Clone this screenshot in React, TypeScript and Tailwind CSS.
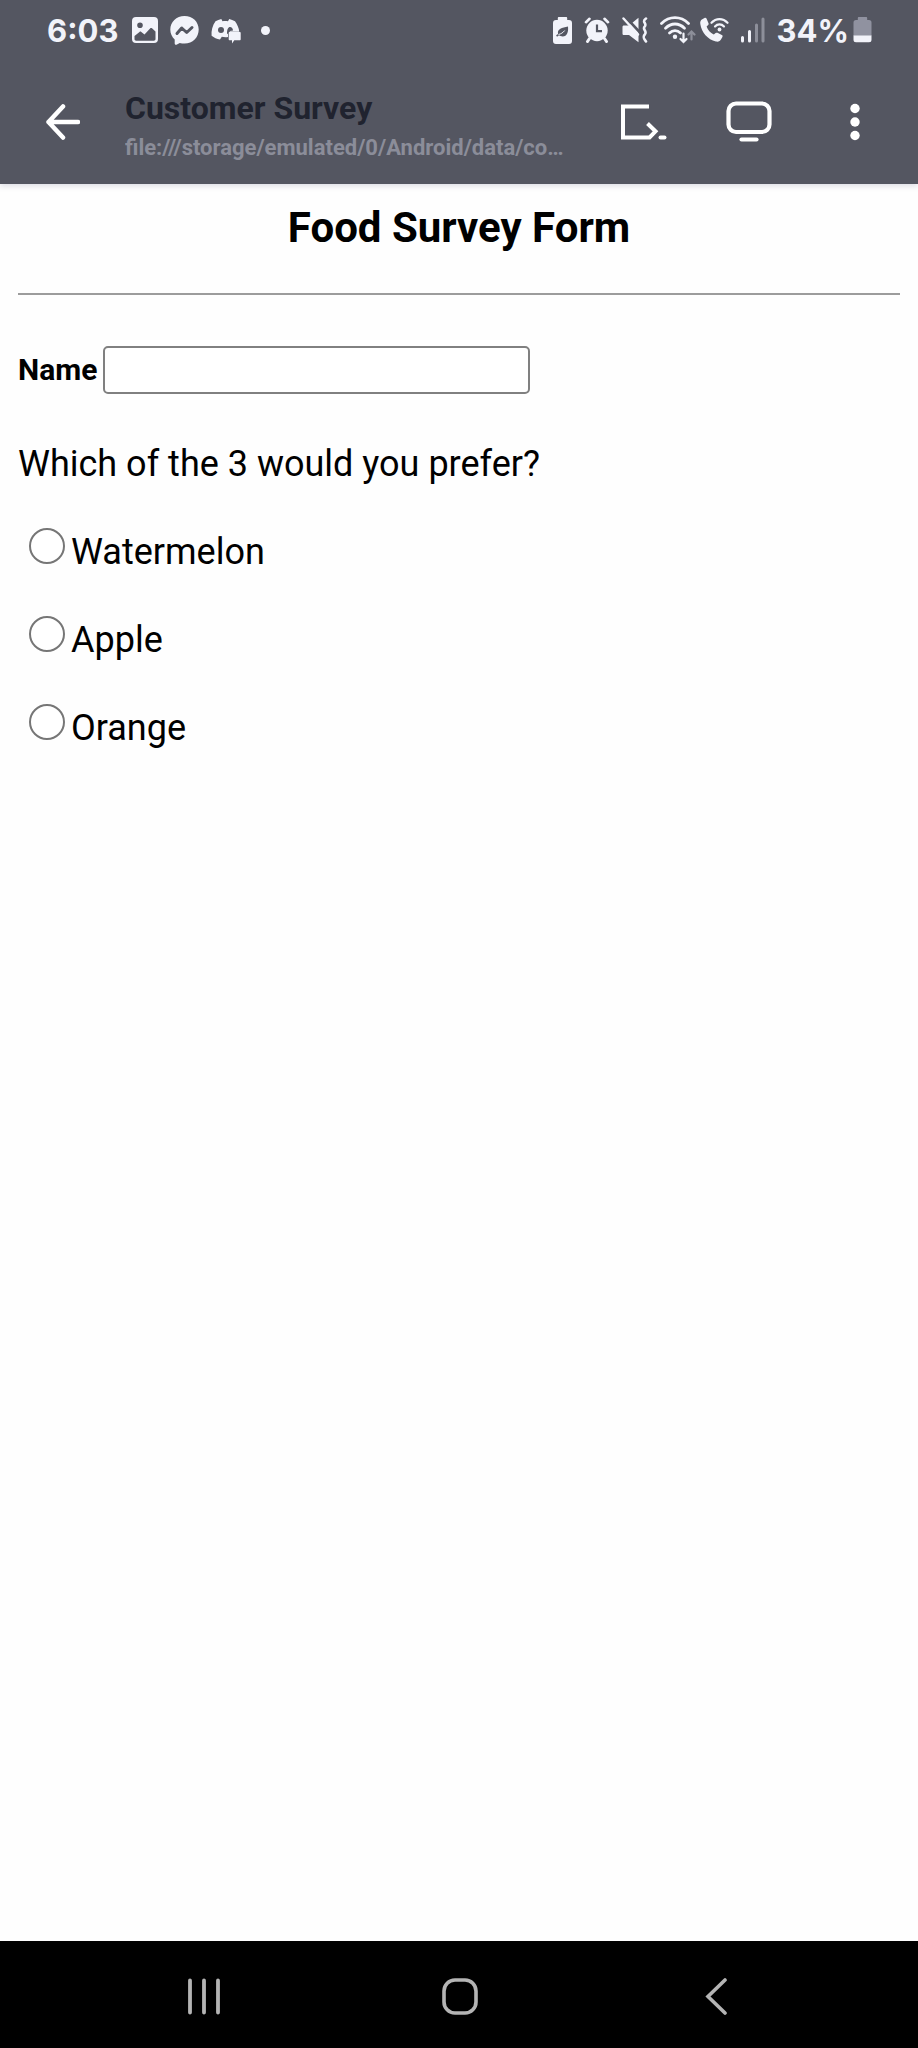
import React, { useState } from "react";

const FRUITS = ["Watermelon", "Apple", "Orange"];

function ImageIcon() {
  return (
    <svg width="26" height="26" viewBox="0 0 26 26" aria-hidden="true">
      <path
        fill="currentColor"
        fillRule="evenodd"
        d="M4 0h18a4 4 0 0 1 4 4v18a4 4 0 0 1-4 4H4a4 4 0 0 1-4-4V4a4 4 0 0 1 4-4ZM8 5.500a2.800 2.800 0 1 0 0 5.600a2.800 2.800 0 0 0 0-5.600ZM2.500 19v3c0 1 .7 1.700 1.700 1.700h17.600c1 0 1.700-.7 1.700-1.700v-7.500l-3.500-3.200c-.6-.5-1.200-.5-1.700 0l-5.800 6.200-3.200-2.600c-.6-.5-1.200-.5-1.800 0L2.500 19Z"
      />
    </svg>
  );
}

function MessengerIcon() {
  return (
    <svg width="29" height="29" viewBox="0 0 29 29" aria-hidden="true">
      <path
        fill="currentColor"
        d="M14.500 0C6.300 0 .3 5.900.3 13.600c0 4 1.700 7.500 4.400 9.900v4c0 1 1 1.600 1.800 1.200l3.300-1.700c1.500.4 3.100.6 4.700.6 8.200 0 14.200-6.100 14.200-14S22.700 0 14.500 0Z"
      />
      <path d="m7 17.500 4.700-5.500 5 4.500 5.300-5" fill="none" stroke="#545661" strokeWidth="3" strokeLinejoin="round" strokeLinecap="round" />
    </svg>
  );
}

function DiscordIcon() {
  return (
    <svg width="30" height="28" viewBox="0 0 30 28" aria-hidden="true">
      <path
        fill="currentColor"
        d="M4.500 5.200C6.300 4.200 8.300 3.500 10.300 3l1.200 2.200c1.800-.3 3.700-.3 5.500 0L18.200 3c2 .5 4 1.200 5.800 2.200 2.400 3.400 3.900 6.800 4.300 10.600H17v5.300c-2.300.3-4 .2-6.200-.3L9 23.600C5.800 23 3 21.700.6 19.800.1 14.500 1.500 9.500 4.500 5.200Z"
      />
      <circle cx="10" cy="14" r="3" fill="#545661" />
      <path d="M16 17.500c0-4.200 1.200-6.500 3-6.500 1.700 0 2.900 1.200 3 3.500l-3 .5-1.500 3.500Z" fill="#545661" />
      <path fill="currentColor" d="M18.700 16h10c.6 0 1 .4 1 1v6.200c0 .6-.4 1-1 1h-5.400L21 27.500v-3.300h-2.300c-.6 0-1-.4-1-1V17c0-.6.4-1 1-1Z" />
    </svg>
  );
}

function PowerSavingIcon() {
  return (
    <svg width="19" height="27" viewBox="0 0 19 27" aria-hidden="true">
      <path fill="currentColor" d="M6 0h7c.8 0 1.200.5 1.200 1.200V3H16a3 3 0 0 1 3 3v18a3 3 0 0 1-3 3H3a3 3 0 0 1-3-3V6a3 3 0 0 1 3-3h1.800V1.200C4.800.5 5.200 0 6 0Z" />
      <path fill="#545661" d="M15 9.500c.6 5.500-.9 10-5.300 10-1.600 0-2.900-.5-3.700-1.200L4 19.700l-.9-1.500 2-1.200C4 12 9 10.500 15 9.500Z" />
      <path d="M5.500 17.500c2.500-.6 4.500-1.800 6.200-4" fill="none" stroke="currentColor" strokeWidth="1" />
    </svg>
  );
}

function AlarmIcon() {
  return (
    <svg width="26" height="26" viewBox="0 0 26 26" aria-hidden="true">
      <g fill="none" stroke="currentColor" strokeLinecap="round">
        <path d="M2 5.200 5.500 1.800M24 5.200 20.500 1.800" strokeWidth="2.600" />
        <path d="m5.500 21.500-2 3M20.500 21.500l2 3" strokeWidth="3" />
      </g>
      <circle cx="13" cy="13.500" r="10.700" fill="currentColor" />
      <path d="M13 7.500v6.700h5" fill="none" stroke="#545661" strokeWidth="2.200" />
    </svg>
  );
}

function MuteVibrateIcon() {
  return (
    <svg width="26" height="26" viewBox="0 0 26 26" aria-hidden="true">
      <path fill="currentColor" d="M2 8.500h5L16.500.8v24.400L7 18H2c-1 0-1.500-.5-1.500-1.500V10c0-1 .5-1.500 1.500-1.500Z" />
      <path d="M3.500 0 18 15.500" stroke="#545661" strokeWidth="2.600" />
      <path d="M1.500 1.500 16 17.500" stroke="currentColor" strokeWidth="2.400" strokeLinecap="round" />
      <path d="M24 1.500c-5 3.600 1 4.200-1 7.600-3.500 3.600 2.500 4.400 0 8-3 3.600-.5 5.200 1 7.400" fill="none" stroke="currentColor" strokeWidth="2.600" strokeLinecap="round" />
    </svg>
  );
}

function WifiIcon() {
  return (
    <svg width="36" height="28" viewBox="0 0 36 28" aria-hidden="true">
      <g fill="none" stroke="currentColor" strokeLinecap="round" strokeWidth="2.800">
        <path d="M1.500 7.500c7.800-7.800 19.200-7.800 27 0" />
        <path d="M5.500 12.200c5.600-5.600 13.400-5.600 19 0" />
        <path d="M9.500 17c3.200-3.200 7.800-3.200 11 0" />
      </g>
      <circle cx="15" cy="20.800" r="2.200" fill="currentColor" />
      <path d="M23.500 17.500V26m-3-3 3 3 3-3" fill="none" stroke="currentColor" strokeWidth="2.200" strokeLinecap="round" />
      <path d="M31.500 23.500V15.500m-3 3 3-3 3 3" fill="none" stroke="#8d8f9a" strokeWidth="2.200" strokeLinecap="round" />
    </svg>
  );
}

function WifiCallIcon() {
  return (
    <svg width="29" height="26" viewBox="0 0 29 26" aria-hidden="true">
      <path
        fill="currentColor"
        d="M2.300 2.300 4.500 1c.8-.5 1.600-.2 2 .6l2 4.600c.3.700.1 1.400-.4 1.900L6.600 9.600c1.200 3.600 3.700 6.300 7.200 8l1.800-1.500c.6-.5 1.200-.6 1.900-.3l4.300 2.200c.8.4 1 1.200.6 2l-1.300 2.300c-1 2-2.800 2.800-5.200 2.300C7.800 22.500 1.500 15.500.3 7 0 4.800.5 3.300 2.300 2.300Z"
      />
      <g fill="none" stroke="currentColor" strokeWidth="2.200" strokeLinecap="round">
        <path d="M11.500 5.800c4.500-5 11.500-5 16 0" />
        <path d="M15 9.500c2.500-2.800 6.500-2.800 9 0" />
      </g>
      <circle cx="19.500" cy="12.500" r="1.900" fill="currentColor" />
    </svg>
  );
}

function SignalIcon() {
  return (
    <svg width="24" height="26" viewBox="0 0 24 26" aria-hidden="true">
      <g strokeWidth="3" strokeLinecap="round">
        <path d="M1.500 20.500V24M8.500 14.500V24" stroke="currentColor" />
        <path d="M15.500 8v16M22 2v22" stroke="#8d8f9a" />
      </g>
    </svg>
  );
}

function BatteryIcon() {
  return (
    <svg width="19" height="26" viewBox="0 0 19 26" aria-hidden="true">
      <path fill="#9092a0" d="M6 0h7c.8 0 1.200.5 1.200 1.200V3H16a2.500 2.500 0 0 1 2.500 2.500V19H.5V5.500A2.500 2.500 0 0 1 3 3h1.800V1.200C4.800.5 5.200 0 6 0Z" />
      <path fill="currentColor" d="M.5 18.500h18v4.200A2.500 2.500 0 0 1 16 25.200H3a2.500 2.500 0 0 1-2.500-2.500Z" />
    </svg>
  );
}

function StatusBar() {
  return (
    <div className="flex h-[60px] items-center justify-between pr-[46px] pl-[47px] font-['Inter',sans-serif] text-[31px] leading-none font-bold text-[#f2f3fa]">
      <div className="flex items-center gap-3">
        <span className="mr-[2px]">6:03</span>
        <ImageIcon />
        <MessengerIcon />
        <DiscordIcon />
        <span className="ml-2 size-[9px] rounded-full bg-[#f2f3fa]" />
      </div>
      <div className="flex items-center gap-3">
        <PowerSavingIcon />
        <AlarmIcon />
        <MuteVibrateIcon />
        <div className="flex items-center gap-1">
          <WifiIcon />
          <WifiCallIcon />
        </div>
        <SignalIcon />
        <div className="flex items-center gap-1">
          <span>34%</span>
          <BatteryIcon />
        </div>
      </div>
    </div>
  );
}

function AppBar() {
  return (
    <div className="flex h-[124px] items-center pr-9 pl-[38px] text-white">
      <button type="button" aria-label="Back" className="shrink-0 p-2">
        <svg width="34" height="36" viewBox="0 0 34 36" fill="none" stroke="currentColor" strokeWidth="4.500" strokeLinecap="round" strokeLinejoin="round" aria-hidden="true">
          <path d="M32 18H2.500M17 2.500 2.500 18 17 33.500" />
        </svg>
      </button>
      <div className="ml-[37px] min-w-0 flex-1 pt-3 font-bold">
        <h1 className="truncate text-[32px] leading-10 text-[#20232f]">Customer Survey</h1>
        <p className="truncate text-[22px] leading-10 text-[#8b8d99]">file:///storage/emulated/0/Android/data/co…</p>
      </div>
      <div className="ml-8 flex shrink-0 items-center">
        <button type="button" aria-label="Console" className="p-2">
          <svg width="48" height="40" viewBox="0 0 48 40" fill="none" stroke="currentColor" strokeWidth="4" aria-hidden="true">
            <path d="M29 4.500H3V35.500h26.500l6-6.200L27.500 21.500" strokeLinejoin="miter" />
            <path d="M40.500 35.500h4" strokeLinecap="round" />
          </svg>
        </button>
        <button type="button" aria-label="Desktop view" className="ml-[42px] p-2">
          <svg width="46" height="42" viewBox="0 0 46 42" fill="none" stroke="currentColor" strokeWidth="4.200" strokeLinecap="round" aria-hidden="true">
            <rect x="2.500" y="2.500" width="41" height="28.500" rx="7.500" />
            <path d="M15.500 38.500h15" />
          </svg>
        </button>
        <button type="button" aria-label="More options" className="ml-12 p-2">
          <svg width="38" height="40" viewBox="0 0 38 40" fill="currentColor" aria-hidden="true">
            <circle cx="19" cy="6.500" r="4.700" />
            <circle cx="19" cy="20" r="4.700" />
            <circle cx="19" cy="33.500" r="4.700" />
          </svg>
        </button>
      </div>
    </div>
  );
}

function SurveyForm() {
  const [choice, setChoice] = useState("");
  return (
    <main className="flex-1 px-[18px] pt-5">
      <h2 className="text-center text-[42px] leading-[48px] font-bold">Food Survey Form</h2>
      <hr className="mt-[41px] border-t-2 border-[#9c9c9c]" />
      <form className="mt-[51px]" onSubmit={(e) => e.preventDefault()}>
        <div className="flex items-center gap-[6px]">
          <label htmlFor="name" className="text-[30px] leading-9 font-bold">
            Name
          </label>
          <input
            id="name"
            type="text"
            className="h-12 w-[427px] max-w-full rounded-[5px] border-2 border-[#808080] bg-white px-2 text-[30px]"
          />
        </div>
        <fieldset className="mt-[46px] flex flex-col gap-10 text-[36px] leading-[48px]">
          <legend className="mb-10">Which of the 3 would you prefer?</legend>
          {FRUITS.map((fruit) => (
            <label key={fruit} className="ml-[11px] flex items-start gap-[6px]">
              <input
                type="radio"
                name="fruit"
                value={fruit}
                checked={choice === fruit}
                onChange={() => setChoice(fruit)}
                className="size-9 shrink-0 appearance-none rounded-full border-2 border-[#767676] bg-white checked:border-[10px] checked:border-[#0075ff]"
              />
              {fruit}
            </label>
          ))}
        </fieldset>
      </form>
    </main>
  );
}

function NavigationBar() {
  return (
    <nav className="flex h-[107px] items-center bg-black pt-[2px] pr-[74px] pl-[76px] text-[#b4b4b4]">
      <button type="button" aria-label="Recent apps" className="flex flex-1 justify-center py-4">
        <svg width="38" height="38" viewBox="0 0 38 38" stroke="currentColor" strokeWidth="3.800" strokeLinecap="round" aria-hidden="true">
          <path d="M5 3.500v32M19 3.500v32M33 3.500v32" />
        </svg>
      </button>
      <button type="button" aria-label="Home" className="flex flex-1 justify-center py-4">
        <svg width="38" height="38" viewBox="0 0 38 38" fill="none" stroke="currentColor" strokeWidth="3.600" aria-hidden="true">
          <rect x="3" y="3" width="32" height="33" rx="11" />
        </svg>
      </button>
      <button type="button" aria-label="Back" className="flex flex-1 justify-center py-4">
        <svg width="38" height="38" viewBox="0 0 38 38" fill="none" stroke="currentColor" strokeWidth="3.600" strokeLinecap="round" strokeLinejoin="miter" aria-hidden="true">
          <path d="M28 3 11 19.500 28 36" />
        </svg>
      </button>
    </nav>
  );
}

export default function App() {
  return (
    <div className="flex min-h-screen flex-col bg-[#fefefe] font-['Roboto',sans-serif] text-black">
      <header className="bg-[#545661] shadow-[0_2px_6px_rgba(80,80,120,0.2)]">
        <StatusBar />
        <AppBar />
      </header>
      <SurveyForm />
      <NavigationBar />
    </div>
  );
}
